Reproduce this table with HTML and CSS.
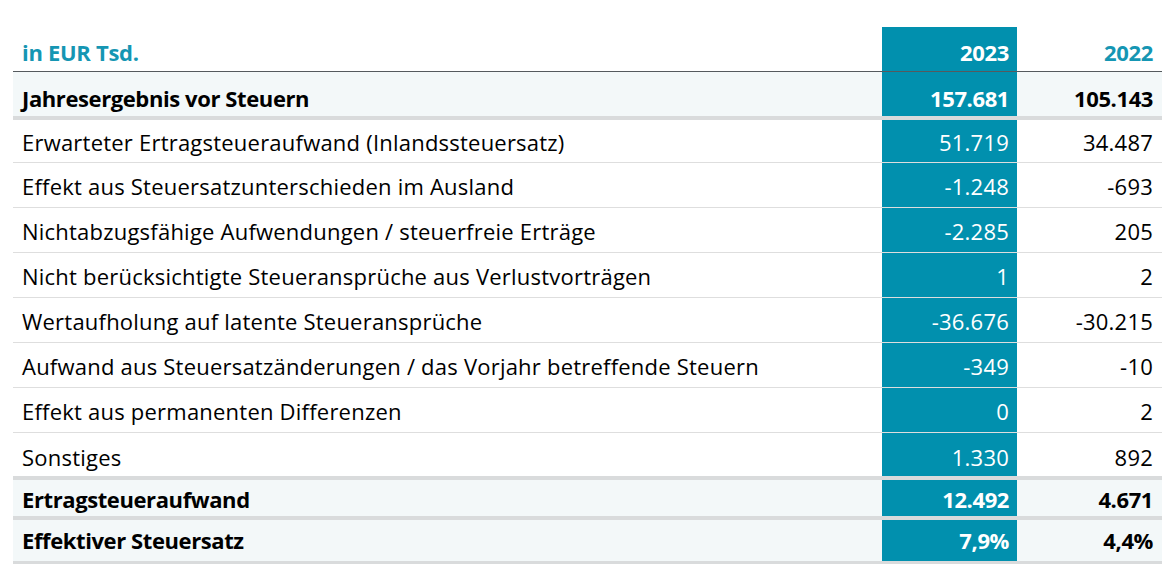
FILE: index.html
```html
<!DOCTYPE html>
<html lang="de">
<head>
<meta charset="utf-8">
<title>Steuerüberleitung</title>
<link rel="stylesheet" href="styles.css">
</head>
<body>
<table class="tax">
  <colgroup>
    <col class="c-label">
    <col class="c-cur">
    <col class="c-prev">
  </colgroup>
  <thead>
    <tr class="head">
      <th class="label">in EUR Tsd.</th>
      <th class="cur">2023</th>
      <th class="prev">2022</th>
    </tr>
  </thead>
  <tbody>
    <tr class="sum first">
      <td class="label">Jahresergebnis vor Steuern</td>
      <td class="cur">157.681</td>
      <td class="prev">105.143</td>
    </tr>
    <tr class="row">
      <td class="label">Erwarteter Ertragsteueraufwand (Inlandssteuersatz)</td>
      <td class="cur">51.719</td>
      <td class="prev">34.487</td>
    </tr>
    <tr class="row">
      <td class="label">Effekt aus Steuersatzunterschieden im Ausland</td>
      <td class="cur">-1.248</td>
      <td class="prev">-693</td>
    </tr>
    <tr class="row">
      <td class="label">Nichtabzugsfähige Aufwendungen / steuerfreie Erträge</td>
      <td class="cur">-2.285</td>
      <td class="prev">205</td>
    </tr>
    <tr class="row">
      <td class="label">Nicht berücksichtigte Steueransprüche aus Verlustvorträgen</td>
      <td class="cur">1</td>
      <td class="prev">2</td>
    </tr>
    <tr class="row">
      <td class="label">Wertaufholung auf latente Steueransprüche</td>
      <td class="cur">-36.676</td>
      <td class="prev">-30.215</td>
    </tr>
    <tr class="row">
      <td class="label">Aufwand aus Steuersatzänderungen / das Vorjahr betreffende Steuern</td>
      <td class="cur">-349</td>
      <td class="prev">-10</td>
    </tr>
    <tr class="row">
      <td class="label">Effekt aus permanenten Differenzen</td>
      <td class="cur">0</td>
      <td class="prev">2</td>
    </tr>
    <tr class="row last">
      <td class="label">Sonstiges</td>
      <td class="cur">1.330</td>
      <td class="prev">892</td>
    </tr>
    <tr class="sum mid">
      <td class="label">Ertragsteueraufwand</td>
      <td class="cur">12.492</td>
      <td class="prev">4.671</td>
    </tr>
    <tr class="sum end">
      <td class="label">Effektiver Steuersatz</td>
      <td class="cur">7,9%</td>
      <td class="prev">4,4%</td>
    </tr>
  </tbody>
</table>
</body>
</html>
```

FILE: styles.css
```css
html, body {
  margin: 0;
  padding: 0;
  background: #ffffff;
}

.tax {
  border-collapse: collapse;
  table-layout: fixed;
  width: 1149px;
  margin: 27px 0 0 13px;
  font-family: "Open Sans", Lato, "Liberation Sans", sans-serif;
  font-size: 22px;
  line-height: 22px;
  color: #000000;
}

.c-label { width: 869px; }
.c-cur { width: 135px; }
.c-prev { width: 145px; }

.tax th,
.tax td {
  padding: 0 8px 0 9px;
  vertical-align: middle;
  white-space: nowrap;
  box-sizing: border-box;
}

.tax .cur,
.tax .prev {
  text-align: right;
}

.tax .prev {
  padding-right: 9px;
}

.tax .cur {
  background: #0190ae;
  color: #ffffff;
}

.head th {
  height: 44px;
  padding-top: 7px;
  font-weight: 700;
  letter-spacing: -0.3px;
  color: #1596b3;
  border-bottom: 1px solid #555a5e;
}

.head th.label {
  text-align: left;
}

.head th.cur {
  color: #ffffff;
}

.row td {
  height: 45px;
  padding-top: 3px;
  letter-spacing: 0.22px;
  border-bottom: 1px solid #dedede;
}

.sum.first + .row td {
  height: 44px;
}

.sum td {
  font-weight: 700;
  letter-spacing: -0.4px;
  background: #f3f8f9;
  border-bottom: 4px solid #d9dbdc;
}

.sum td.cur {
  background: #0190ae;
}

.sum.first td {
  height: 47px;
  padding-top: 8px;
}

.row.last td {
  height: 46px;
  padding-top: 6px;
  border-bottom: 4px solid #d9dbdc;
}

.sum.mid td {
  height: 40px;
  padding-top: 2px;
}

.sum.end td {
  height: 44px;
  padding-bottom: 1px;
  border-bottom-width: 3px;
}
```
